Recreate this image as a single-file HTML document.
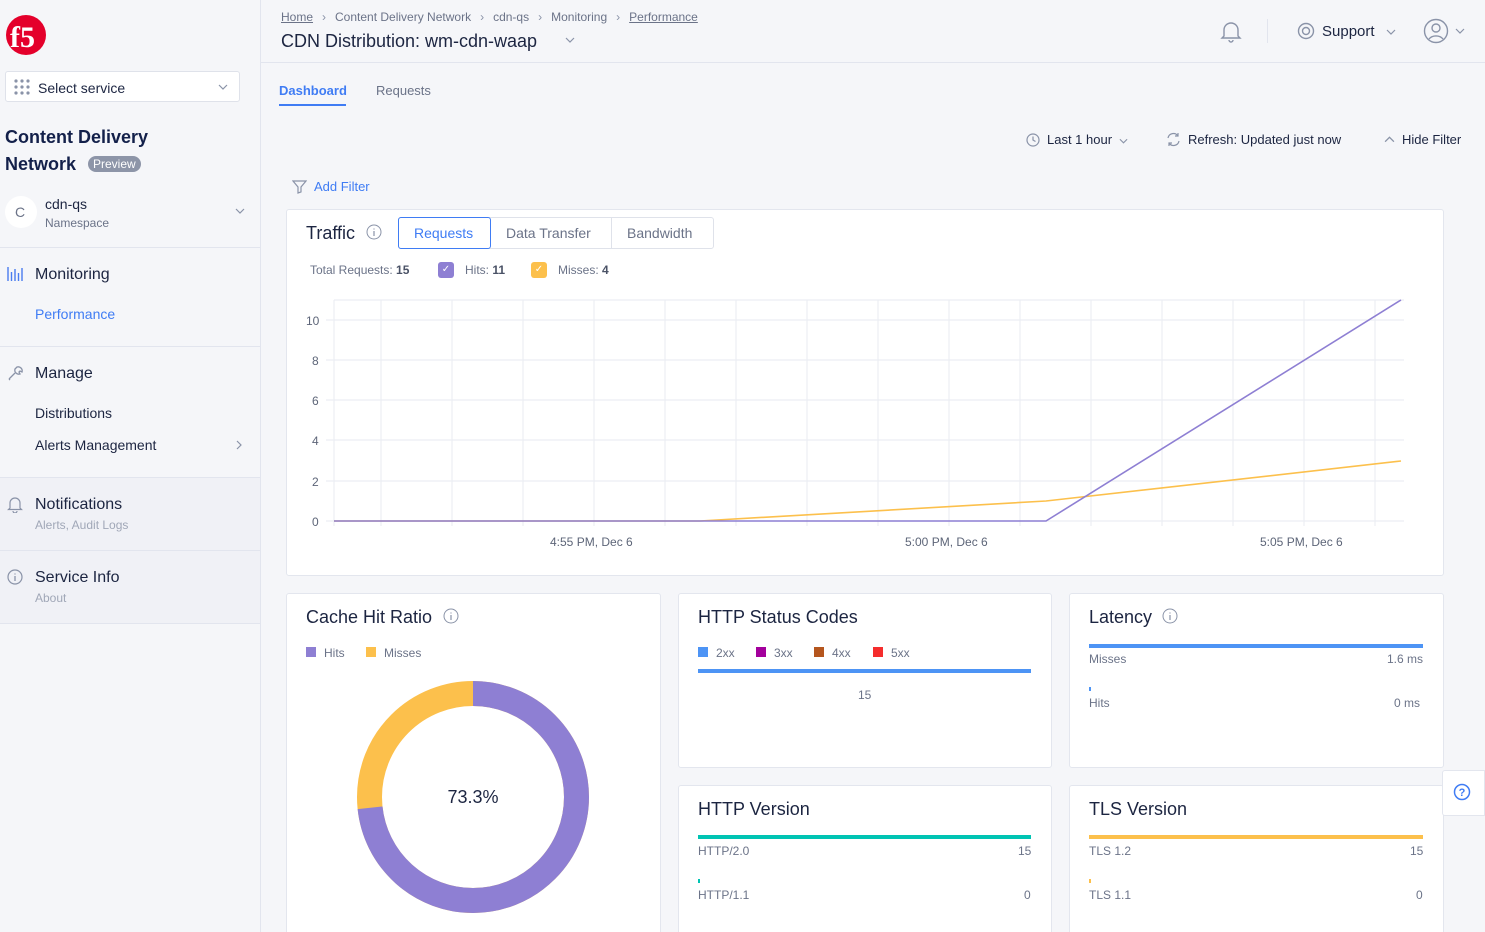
<!DOCTYPE html>
<html style="overflow:hidden;width:1485px;height:932px"><head><meta charset="utf-8"><style>
*{box-sizing:border-box;margin:0;padding:0}
body{width:1485px;height:932px;overflow:hidden;background:#f5f6f9;font-family:"Liberation Sans",sans-serif;color:#1c2541;position:relative}
.abs{position:absolute}
.side{position:absolute;left:0;top:0;width:261px;height:932px;border-right:1px solid #e2e5ee;background:#f5f6f9}
.hr{position:absolute;left:0;width:260px;height:1px;background:#e2e5ee}
.card{position:absolute;background:#fff;border:1px solid #e3e6ee;border-radius:3px}
.t{position:absolute;white-space:nowrap}
.g{color:#6b7388}
.sep{display:inline-block;margin:0 9px;color:#8a93a8}
</style></head><body>
<svg width="0" height="0" style="position:absolute"><defs><symbol id="chev" viewBox="0 0 10 6"><path d="M1 1l4 4 4-4" fill="none" stroke="#8a93a8" stroke-width="1.2"/></symbol></defs></svg>
<div class="side">
 <svg class="abs" style="left:5px;top:14px" width="42" height="42" viewBox="0 0 42 42"><circle cx="21" cy="21" r="20" fill="#e4002b"/><text x="5" y="33" font-family="Liberation Serif" font-weight="bold" font-size="30" fill="#fff">f5</text></svg>
 <div class="abs" style="left:5px;top:71px;width:235px;height:31px;background:#fff;border:1px solid #dfe2ea;border-radius:3px"></div>
 <svg class="abs" style="left:14px;top:79px" width="16" height="16"><g fill="#8a93a8"><circle cx="2" cy="2" r="1.6"/><circle cx="8" cy="2" r="1.6"/><circle cx="14" cy="2" r="1.6"/><circle cx="2" cy="8" r="1.6"/><circle cx="8" cy="8" r="1.6"/><circle cx="14" cy="8" r="1.6"/><circle cx="2" cy="14" r="1.6"/><circle cx="8" cy="14" r="1.6"/><circle cx="14" cy="14" r="1.6"/></g></svg>
 <div class="t" style="left:38px;top:80px;font-size:14px">Select service</div>
 <svg class="abs" style="left:218px;top:84px" width="10" height="6"><use href="#chev"/></svg>
 <div class="t" style="left:5px;top:127px;font-size:18px;font-weight:bold;color:#13204a">Content Delivery</div>
 <div class="t" style="left:5px;top:154px;font-size:18px;font-weight:bold;color:#13204a">Network</div>
 <div class="t" style="left:88px;top:156px;font-size:12px;background:#8d95a8;color:#fff;border-radius:8px;padding:1px 5px">Preview</div>
 <div class="abs" style="left:5px;top:196px;width:32px;height:32px;border-radius:50%;background:#fff"></div>
 <div class="t g" style="left:15px;top:204px;font-size:14px">C</div>
 <div class="t" style="left:45px;top:196px;font-size:14px">cdn-qs</div>
 <div class="t g" style="left:45px;top:216px;font-size:12px">Namespace</div>
 <svg class="abs" style="left:235px;top:208px" width="10" height="6"><use href="#chev"/></svg>
 <div class="hr" style="top:247px"></div>
 <svg class="abs" style="left:7px;top:266px" width="17" height="15"><g stroke="#4a7cf0" stroke-width="1.4"><path d="M1 1v14M4.5 6v9M8 3v12M11.5 7v8M15 2v13"/></g></svg>
 <div class="t" style="left:35px;top:266px;font-size:16px">Monitoring</div>
 <div class="t" style="left:35px;top:306px;font-size:14px;color:#3f7cf4">Performance</div>
 <div class="hr" style="top:346px"></div>
 <svg class="abs" style="left:7px;top:365px" width="17" height="17" viewBox="0 0 17 17"><path d="M2 14l6-6M10 2a4 4 0 0 1 5 5l-2-1-1 1 1 2a4 4 0 0 1-5-5zM2 14l1 1" stroke="#8a93a8" fill="none" stroke-width="1.3"/></svg>
 <div class="t" style="left:35px;top:365px;font-size:16px">Manage</div>
 <div class="t" style="left:35px;top:405px;font-size:14px">Distributions</div>
 <div class="t" style="left:35px;top:437px;font-size:14px">Alerts Management</div>
 <svg class="abs" style="left:236px;top:440px" width="6" height="10" viewBox="0 0 6 10"><path d="M1 1l4 4-4 4" fill="none" stroke="#8a93a8" stroke-width="1.2"/></svg>
 <div class="hr" style="top:477px"></div>
 <div class="abs" style="left:0;top:478px;width:260px;height:146px;background:#f0f1f6"></div>
 <svg class="abs" style="left:7px;top:496px" width="16" height="17" viewBox="0 0 16 17"><path d="M3 12V7a5 5 0 0 1 10 0v5l1.5 1.5h-13zM6 15a2 2 0 0 0 4 0" stroke="#8a93a8" fill="none" stroke-width="1.2"/></svg>
 <div class="t" style="left:35px;top:496px;font-size:16px">Notifications</div>
 <div class="t" style="left:35px;top:518px;font-size:12px;color:#a0a7b7">Alerts, Audit Logs</div>
 <div class="hr" style="top:550px"></div>
 <svg class="abs" style="left:7px;top:569px" width="16" height="16"><circle cx="8" cy="8" r="7" stroke="#8a93a8" fill="none" stroke-width="1.2"/><path d="M8 7v5M8 4.5v1" stroke="#8a93a8" stroke-width="1.3"/></svg>
 <div class="t" style="left:35px;top:569px;font-size:16px">Service Info</div>
 <div class="t" style="left:35px;top:591px;font-size:12px;color:#a0a7b7">About</div>
 <div class="hr" style="top:623px"></div>
</div>

<!-- header -->
<div class="t g" style="left:281px;top:10px;font-size:12px"><u>Home</u><span class="sep">&#8250;</span>Content Delivery Network<span class="sep">&#8250;</span>cdn-qs<span class="sep">&#8250;</span>Monitoring<span class="sep">&#8250;</span><u>Performance</u></div>
<div class="t" style="left:281px;top:31px;font-size:18px">CDN Distribution: wm-cdn-waap</div>
<svg class="abs" style="left:565px;top:37px" width="10" height="6"><use href="#chev"/></svg>
<svg class="abs" style="left:1219px;top:19px" width="24" height="24" viewBox="0 0 24 24"><path d="M5 17V11a7 7 0 0 1 14 0v6l2 2H3zM10 21a2 2 0 0 0 4 0" stroke="#8a93a8" fill="none" stroke-width="1.4"/></svg>
<div class="abs" style="left:1267px;top:19px;width:1px;height:24px;background:#e2e5ee"></div>
<svg class="abs" style="left:1297px;top:22px" width="18" height="18"><circle cx="9" cy="9" r="7.5" stroke="#8a93a8" fill="none" stroke-width="1.4"/><circle cx="9" cy="9" r="3.5" stroke="#8a93a8" fill="none" stroke-width="1.4"/></svg>
<div class="t" style="left:1322px;top:23px;font-size:15px">Support</div>
<svg class="abs" style="left:1386px;top:29px" width="10" height="6"><use href="#chev"/></svg>
<svg class="abs" style="left:1423px;top:18px" width="26" height="26"><circle cx="13" cy="13" r="11.5" stroke="#8a93a8" fill="none" stroke-width="1.4"/><circle cx="13" cy="10" r="4" stroke="#8a93a8" fill="none" stroke-width="1.4"/><path d="M6 21a8 6 0 0 1 14 0" stroke="#8a93a8" fill="none" stroke-width="1.4"/></svg>
<svg class="abs" style="left:1455px;top:28px" width="10" height="6"><use href="#chev"/></svg>
<div class="abs" style="left:261px;top:62px;width:1224px;height:1px;background:#e2e5ee"></div>

<div class="t" style="left:279px;top:83px;font-size:13px;font-weight:bold;color:#3f7cf4">Dashboard</div>
<div class="abs" style="left:279px;top:104px;width:67px;height:2px;background:#3f7cf4"></div>
<div class="t g" style="left:376px;top:83px;font-size:13px">Requests</div>

<svg class="abs" style="left:1026px;top:133px" width="14" height="14"><circle cx="7" cy="7" r="6" stroke="#8a93a8" fill="none" stroke-width="1.2"/><path d="M7 3.5V7l2.5 1.5" stroke="#8a93a8" fill="none" stroke-width="1.2"/></svg>
<div class="t" style="left:1047px;top:132px;font-size:13px">Last 1 hour</div>
<svg class="abs" style="left:1119px;top:138px" width="9" height="6"><use href="#chev"/></svg>
<svg class="abs" style="left:1166px;top:132px" width="15" height="15" viewBox="0 0 15 15"><path d="M2 6a5.5 5.5 0 0 1 10-2M13 9a5.5 5.5 0 0 1-10 2M12 1v3h-3M3 14v-3h3" fill="none" stroke="#8a93a8" stroke-width="1.2"/></svg>
<div class="t" style="left:1188px;top:132px;font-size:13px">Refresh: Updated just now</div>
<svg class="abs" style="left:1384px;top:136px" width="11" height="7" viewBox="0 0 10 6"><path d="M1 5l4-4 4 4" fill="none" stroke="#8a93a8" stroke-width="1.2"/></svg>
<div class="t" style="left:1402px;top:132px;font-size:13px">Hide Filter</div>
<svg class="abs" style="left:292px;top:180px" width="15" height="14"><path d="M1 1h13l-5 6v5l-3 1V7z" stroke="#8a93a8" fill="none" stroke-width="1.2"/></svg>
<div class="t" style="left:314px;top:179px;font-size:13px;color:#3f7cf4">Add Filter</div>

<!-- traffic -->
<div class="card" style="left:286px;top:209px;width:1158px;height:367px"></div>
<div class="t" style="left:306px;top:223px;font-size:18px">Traffic</div>
<svg class="abs" style="left:366px;top:224px" width="16" height="16"><circle cx="8" cy="8" r="7" stroke="#8a93a8" fill="none"/><path d="M8 7v5M8 4.5v1" stroke="#8a93a8" stroke-width="1.2"/></svg>
<div class="abs" style="left:398px;top:217px;width:316px;height:32px;border:1px solid #dfe2ea;border-radius:3px"></div>
<div class="abs" style="left:611px;top:218px;width:1px;height:30px;background:#dfe2ea"></div>
<div class="abs" style="left:398px;top:217px;width:93px;height:32px;border:1px solid #3f7cf4;border-radius:3px"></div>
<div class="t" style="left:414px;top:225px;font-size:14px;color:#3f7cf4">Requests</div>
<div class="t g" style="left:506px;top:225px;font-size:14px">Data Transfer</div>
<div class="t g" style="left:627px;top:225px;font-size:14px">Bandwidth</div>
<div class="t g" style="left:310px;top:263px;font-size:12px">Total Requests: <b style="color:#4a5266">15</b></div>
<div class="abs" style="left:438px;top:262px;width:16px;height:16px;border-radius:3px;background:#8e7fd3;color:#fff;font-size:10px;text-align:center;line-height:16px">&#10003;</div>
<div class="t g" style="left:465px;top:263px;font-size:12px">Hits: <b style="color:#4a5266">11</b></div>
<div class="abs" style="left:531px;top:262px;width:16px;height:16px;border-radius:3px;background:#fcc04c;color:#fff;font-size:10px;text-align:center;line-height:16px">&#10003;</div>
<div class="t g" style="left:558px;top:263px;font-size:12px">Misses: <b style="color:#4a5266">4</b></div>
<svg class="abs" style="left:290px;top:290px" width="1130" height="270">
 <g stroke="#eceef3" stroke-width="1.2">
  <line x1="44" y1="10" x2="1114" y2="10"/><line x1="36" y1="30" x2="1114" y2="30"/><line x1="36" y1="70" x2="1114" y2="70"/><line x1="36" y1="110" x2="1114" y2="110"/><line x1="36" y1="150" x2="1114" y2="150"/><line x1="36" y1="191" x2="1114" y2="191"/><line x1="36" y1="231" x2="1114" y2="231"/>
  <line x1="44" y1="10" x2="44" y2="236"/>
  <line x1="91" y1="10" x2="91" y2="236"/><line x1="162" y1="10" x2="162" y2="236"/><line x1="233" y1="10" x2="233" y2="236"/><line x1="304" y1="10" x2="304" y2="236"/><line x1="375" y1="10" x2="375" y2="236"/><line x1="446" y1="10" x2="446" y2="236"/><line x1="517" y1="10" x2="517" y2="236"/><line x1="588" y1="10" x2="588" y2="236"/><line x1="659" y1="10" x2="659" y2="236"/><line x1="730" y1="10" x2="730" y2="236"/><line x1="801" y1="10" x2="801" y2="236"/><line x1="872" y1="10" x2="872" y2="236"/><line x1="943" y1="10" x2="943" y2="236"/><line x1="1014" y1="10" x2="1014" y2="236"/><line x1="1085" y1="10" x2="1085" y2="236"/>
 </g>
 <g font-size="12" fill="#5d6578" font-family="Liberation Sans">
  <text x="16" y="35">10</text><text x="22" y="75">8</text><text x="22" y="115">6</text><text x="22" y="155">4</text><text x="22" y="196">2</text><text x="22" y="236">0</text>
  <text x="260" y="256">4:55 PM, Dec 6</text><text x="615" y="256">5:00 PM, Dec 6</text><text x="970" y="256">5:05 PM, Dec 6</text>
 </g>
 <polyline points="44,231 410,231 756,211 1111,171" fill="none" stroke="#fcc04c" stroke-width="1.6"/>
 <polyline points="44,231 756,231 1111,10" fill="none" stroke="#8e7fd3" stroke-width="1.6"/>
</svg>

<!-- cache -->
<div class="card" style="left:286px;top:593px;width:375px;height:360px"></div>
<div class="t" style="left:306px;top:607px;font-size:18px">Cache Hit Ratio</div>
<svg class="abs" style="left:443px;top:608px" width="16" height="16"><circle cx="8" cy="8" r="7" stroke="#8a93a8" fill="none"/><path d="M8 7v5M8 4.5v1" stroke="#8a93a8" stroke-width="1.2"/></svg>
<div class="abs" style="left:306px;top:647px;width:10px;height:10px;background:#8e7fd3"></div>
<div class="t g" style="left:324px;top:646px;font-size:12px">Hits</div>
<div class="abs" style="left:366px;top:647px;width:10px;height:10px;background:#fcc04c"></div>
<div class="t g" style="left:384px;top:646px;font-size:12px">Misses</div>
<svg class="abs" style="left:353px;top:677px" width="240" height="240">
 <circle cx="120" cy="120" r="103.5" fill="none" stroke="#fcc04c" stroke-width="25"/>
 <circle cx="120" cy="120" r="103.5" fill="none" stroke="#8e7fd3" stroke-width="25" stroke-dasharray="476.7 700" transform="rotate(-90 120 120)"/>
 <text x="120" y="126" text-anchor="middle" font-size="18" fill="#1c2541" font-family="Liberation Sans">73.3%</text>
</svg>

<!-- status -->
<div class="card" style="left:678px;top:593px;width:374px;height:175px"></div>
<div class="t" style="left:698px;top:607px;font-size:18px">HTTP Status Codes</div>
<div class="abs" style="left:698px;top:647px;width:10px;height:10px;background:#4d94f5"></div><div class="t g" style="left:716px;top:646px;font-size:12px">2xx</div>
<div class="abs" style="left:756px;top:647px;width:10px;height:10px;background:#a3009c"></div><div class="t g" style="left:774px;top:646px;font-size:12px">3xx</div>
<div class="abs" style="left:814px;top:647px;width:10px;height:10px;background:#b5561e"></div><div class="t g" style="left:832px;top:646px;font-size:12px">4xx</div>
<div class="abs" style="left:873px;top:647px;width:10px;height:10px;background:#f52d2d"></div><div class="t g" style="left:891px;top:646px;font-size:12px">5xx</div>
<div class="abs" style="left:698px;top:669px;width:333px;height:4px;background:#4d94f5"></div>
<div class="t g" style="left:858px;top:688px;font-size:12px">15</div>

<!-- latency -->
<div class="card" style="left:1069px;top:593px;width:375px;height:175px"></div>
<div class="t" style="left:1089px;top:607px;font-size:18px">Latency</div>
<svg class="abs" style="left:1162px;top:608px" width="16" height="16"><circle cx="8" cy="8" r="7" stroke="#8a93a8" fill="none"/><path d="M8 7v5M8 4.5v1" stroke="#8a93a8" stroke-width="1.2"/></svg>
<div class="abs" style="left:1089px;top:644px;width:334px;height:4px;background:#4d94f5"></div>
<div class="t g" style="left:1089px;top:652px;font-size:12px">Misses</div><div class="t g" style="left:1387px;top:652px;font-size:12px">1.6 ms</div>
<div class="abs" style="left:1089px;top:687px;width:2px;height:4px;background:#4d94f5"></div>
<div class="t g" style="left:1089px;top:696px;font-size:12px">Hits</div><div class="t g" style="left:1394px;top:696px;font-size:12px">0 ms</div>

<!-- http version -->
<div class="card" style="left:678px;top:785px;width:374px;height:170px"></div>
<div class="t" style="left:698px;top:799px;font-size:18px">HTTP Version</div>
<div class="abs" style="left:698px;top:835px;width:333px;height:4px;background:#00c4b3"></div>
<div class="t g" style="left:698px;top:844px;font-size:12px">HTTP/2.0</div><div class="t g" style="left:1018px;top:844px;font-size:12px">15</div>
<div class="abs" style="left:698px;top:879px;width:2px;height:4px;background:#00c4b3"></div>
<div class="t g" style="left:698px;top:888px;font-size:12px">HTTP/1.1</div><div class="t g" style="left:1024px;top:888px;font-size:12px">0</div>

<!-- tls -->
<div class="card" style="left:1069px;top:785px;width:375px;height:170px"></div>
<div class="t" style="left:1089px;top:799px;font-size:18px">TLS Version</div>
<div class="abs" style="left:1089px;top:835px;width:334px;height:4px;background:#fcc04c"></div>
<div class="t g" style="left:1089px;top:844px;font-size:12px">TLS 1.2</div><div class="t g" style="left:1410px;top:844px;font-size:12px">15</div>
<div class="abs" style="left:1089px;top:879px;width:2px;height:4px;background:#fcc04c"></div>
<div class="t g" style="left:1089px;top:888px;font-size:12px">TLS 1.1</div><div class="t g" style="left:1416px;top:888px;font-size:12px">0</div>

<div class="abs" style="left:1442px;top:770px;width:43px;height:46px;background:#fff;border:1px solid #e3e6ee;border-radius:3px 0 0 3px"></div>
<svg class="abs" style="left:1453px;top:783px" width="18" height="18"><circle cx="9" cy="9" r="7.5" stroke="#3f7cf4" fill="none" stroke-width="1.5"/><text x="9" y="13" text-anchor="middle" font-size="11" font-weight="bold" fill="#3f7cf4" font-family="Liberation Sans">?</text></svg>
</body></html>
